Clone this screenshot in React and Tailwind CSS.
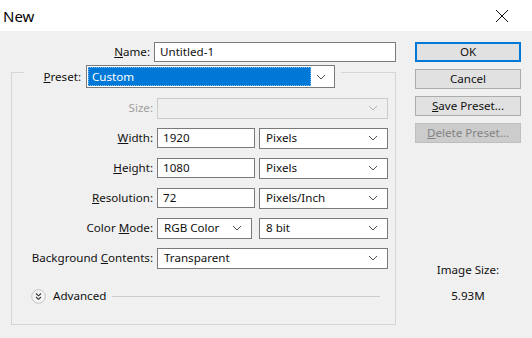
function Chevron({ disabled }) {
  return (
    <svg width="10" height="6" viewBox="0 0 10 6" className="shrink-0">
      <path
        d="M1 1 L5 5 L9 1"
        fill="none"
        stroke={disabled ? "#b4b4b4" : "#505050"}
        strokeWidth="1"
      />
    </svg>
  );
}

function Select({ value, width, disabled }) {
  return (
    <div
      className={
        "h-[21px] flex items-center justify-between pl-[6px] pr-[9px] border " +
        (disabled ? "border-[#cccccc] bg-[#efefef]" : "border-[#7a7a7a] bg-white")
      }
      style={{ width }}
    >
      <span>{value}</span>
      <Chevron disabled={disabled} />
    </div>
  );
}

function Input({ value, width }) {
  return (
    <div
      className="h-[20px] flex items-center px-[5px] border border-[#7a7a7a] bg-white"
      style={{ width }}
    >
      {value}
    </div>
  );
}

function Row({ label, mnemonic, rest, disabled, children }) {
  return (
    <div className="h-[30px] flex items-center">
      <div className={"w-[141px] text-right " + (disabled ? "text-[#a0a0a0]" : "")}>
        {label}
        {mnemonic && <span className="underline">{mnemonic}</span>}
        {rest}
      </div>
      <div className="ml-[4px] flex items-center">{children}</div>
    </div>
  );
}

function Button({ children, primary, disabled }) {
  return (
    <div
      className={
        "h-[20px] w-[106px] flex items-center justify-center " +
        (primary
          ? "border-2 border-[#0078d7] bg-[#e1e1e1]"
          : disabled
          ? "border border-[#bfbfbf] bg-[#cccccc] text-[#838383]"
          : "border border-[#adadad] bg-[#e1e1e1]")
      }
    >
      {children}
    </div>
  );
}

export default function App() {
  return (
    <div className="w-[532px] h-[338px] bg-[#f0f0f0] text-[11.6px] leading-[16px] text-[#111] font-['Noto_Sans',sans-serif] overflow-hidden">
      {/* TITLE BAR */}
      <div className="h-[31px] bg-white flex items-center justify-between">
        <span className="ml-[3px] text-[15px] text-black">New</span>
        <svg width="14" height="14" viewBox="0 0 14 14" className="mr-[23px]">
          <path d="M1 1 L13 13 M13 1 L1 13" stroke="#111" strokeWidth="1" />
        </svg>
      </div>

      {/* BODY */}
      <div className="flex pt-[10px] pl-[11px]">
        {/* LEFT */}
        <div className="w-[385px]">
          <div className="h-[21px] flex items-center">
            <div className="w-[142px] text-right">
              <span className="underline">N</span>ame:
            </div>
            <div className="ml-[4px] shrink-0">
              <Input value="Untitled-1" width={242} />
            </div>
          </div>

          <fieldset className="-mt-[6px] w-[385px] border border-[#d5d5d5] pb-[18px]">
            <legend className="ml-[12px] pt-[9px] flex items-center pr-[6px]">
              <div className="w-[57px] text-right">
                <span className="underline">P</span>reset:
              </div>
              <div className="ml-[5px] w-[249px] h-[23px] border border-[#7a7a7a] bg-white flex items-center p-[1px] pr-[8px]">
                <div className="flex-1 h-full bg-[#0078d7] border border-dotted border-[#7fb8e8] text-white flex items-center pl-[3px] mr-[5px]">
                  Custom
                </div>
                <Chevron />
              </div>
            </legend>

            <div className="pt-[5px]">
              <Row label="Size:" disabled>
                <Select value="" width={231} disabled />
              </Row>
              <Row mnemonic="W" rest="idth:">
                <Input value="1920" width={98} />
                <div className="ml-[4px]">
                  <Select value="Pixels" width={129} />
                </div>
              </Row>
              <Row mnemonic="H" rest="eight:">
                <Input value="1080" width={98} />
                <div className="ml-[4px]">
                  <Select value="Pixels" width={129} />
                </div>
              </Row>
              <Row mnemonic="R" rest="esolution:">
                <Input value="72" width={98} />
                <div className="ml-[4px]">
                  <Select value="Pixels/Inch" width={129} />
                </div>
              </Row>
              <Row label="Color " mnemonic="M" rest="ode:">
                <Select value="RGB Color" width={95} />
                <div className="ml-[7px]">
                  <Select value="8 bit" width={129} />
                </div>
              </Row>
              <Row label="Background " mnemonic="C" rest="ontents:">
                <Select value="Transparent" width={231} />
              </Row>
            </div>

            {/* ADVANCED */}
            <div className="mt-[13px] h-[20px] flex items-center pl-[19px] pr-[15px]">
              <svg width="15" height="15" viewBox="0 0 15 15" className="shrink-0">
                <circle cx="7.5" cy="7.5" r="6.8" fill="#f4f4f4" stroke="#c4c4c4" />
                <path d="M5 4.5 L7.5 6.8 L10 4.5 M5 8 L7.5 10.3 L10 8" fill="none" stroke="#333" strokeWidth="1.1" />
              </svg>
              <span className="ml-[7px]">Advanced</span>
              <div className="flex-1 ml-[6px] h-px bg-[#cdcdcd]" />
            </div>
          </fieldset>
        </div>

        {/* RIGHT */}
        <div className="ml-[19px] w-[106px] pt-[1px] flex flex-col items-center">
          <div className="flex flex-col gap-[7px]">
            <Button primary>OK</Button>
            <Button>Cancel</Button>
            <Button>
              <span>
                <span className="underline">S</span>ave Preset...
              </span>
            </Button>
            <Button disabled>
              <span>
                <span className="underline">D</span>elete Preset...
              </span>
            </Button>
          </div>
          <div className="mt-[119px]">Image Size:</div>
          <div className="mt-[10px]">5.93M</div>
        </div>
      </div>
    </div>
  );
}
